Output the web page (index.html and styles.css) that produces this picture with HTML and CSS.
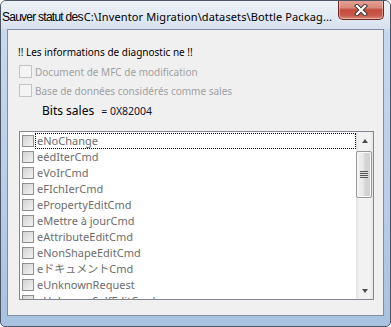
FILE: index.html
```html
<!DOCTYPE html>
<html lang="fr">

<head>
  <meta charset="UTF-8">
  <meta name="viewport" content="width=device-width, initial-scale=1.0">
  <title>Sauver statut des</title>
  <link rel="stylesheet" href="styles.css">
</head>

<body>
  <div class="window">
    <header class="titlebar">
      <span class="title"><span class="title-app">Sauver statut des</span>C:\Inventor Migration\datasets\Bottle Packag...</span>
      <button class="close" aria-label="Fermer">
        <svg width="14" height="12" viewBox="0 0 14 12">
          <path d="M3 2 L11 10 M11 2 L3 10" stroke="#3b3b3b" stroke-width="4.2" stroke-linecap="square" />
          <path d="M3 2 L11 10 M11 2 L3 10" stroke="#fff" stroke-width="2.2" stroke-linecap="square" />
        </svg>
      </button>
    </header>
    <section class="frame">
      <div class="client">
        <p class="note">!! Les informations de diagnostic ne !!</p>
        <label class="check disabled"><span class="box"></span>Document de MFC de modification</label>
        <label class="check disabled"><span class="box"></span>Base de données considérés comme sales</label>
        <div class="bits">
          <span class="bits-label">Bits sales</span>
          <span class="bits-value">= 0X82004</span>
        </div>
        <div class="list">
          <ul class="items">
            <li class="item"><span class="box"></span><span class="text focus">eNoChange</span></li>
            <li class="item"><span class="box"></span><span class="text">eédIterCmd</span></li>
            <li class="item"><span class="box"></span><span class="text">eVoIrCmd</span></li>
            <li class="item"><span class="box"></span><span class="text">eFIchIerCmd</span></li>
            <li class="item"><span class="box"></span><span class="text">ePropertyEditCmd</span></li>
            <li class="item"><span class="box"></span><span class="text">eMettre à jourCmd</span></li>
            <li class="item"><span class="box"></span><span class="text">eAttributeEditCmd</span></li>
            <li class="item"><span class="box"></span><span class="text">eNonShapeEditCmd</span></li>
            <li class="item"><span class="box"></span><span class="text">eドキュメントCmd</span></li>
            <li class="item"><span class="box"></span><span class="text">eUnknownRequest</span></li>
            <li class="item"><span class="box"></span><span class="text">eUnknownSelfEditCmd</span></li>
          </ul>
          <div class="scrollbar">
            <span class="arrow up"></span>
            <span class="thumb"><span class="grip"></span></span>
            <span class="track"></span>
            <span class="arrow down"></span>
          </div>
        </div>
      </div>
    </section>
  </div>
</body>

</html>
```

FILE: styles.css
```css
html {
  box-sizing: border-box;
  font-family: "Noto Sans", "Noto Sans CJK JP", sans-serif;
  font-size: 11px;
}

*,
*::before,
*::after {
  box-sizing: inherit;
}

body {
  margin: 0;
  width: 391px;
  height: 327px;
  overflow: hidden;
  background: #fff;
}

.window {
  width: 391px;
  height: 327px;
  border: 1px solid #4a5566;
  border-radius: 6px 6px 5px 5px;
  background: linear-gradient(to bottom, #c9dbef 0, #b8cee8 60%, #a9c2e0 100%);
  display: flex;
  flex-direction: column;
  overflow: hidden;
}

.titlebar {
  height: 28px;
  display: flex;
  align-items: flex-start;
  background: linear-gradient(to bottom, #eef2f7 0, #e3eaf3 50%, #d6e2ef 100%);
}

.title {
  margin-top: 8px;
  padding-left: 1px;
  color: #000;
  font-size: 11px;
  letter-spacing: 0.12px;
  white-space: nowrap;
  overflow: hidden;
}

.title-app {
  font-family: "Liberation Sans", sans-serif;
  font-size: 12px;
  letter-spacing: -0.75px;
  margin-right: 1px;
}

.close {
  margin-left: auto;
  margin-right: 6px;
  width: 46px;
  height: 20px;
  margin-top: -1px;
  padding: 0;
  border: 1px solid #6d2a22;
  border-top: 0;
  border-radius: 0 0 5px 5px;
  background: linear-gradient(to bottom, #e8a496 0, #d88a7c 40%, #c54b3b 52%, #c8584a 80%, #d98a78 100%);
  box-shadow: inset 0 0 0 1px rgba(255, 255, 255, .35);
  display: flex;
  align-items: center;
  justify-content: center;
}

.frame {
  flex: 1;
  padding: 0 6px 10px 6px;
}

.client {
  height: 100%;
  border: 1px solid #7f8da0;
  background: #f0f0f0;
  padding: 13px 9px 0 10px;
  color: #000;
}

.note {
  margin: 0;
  height: 19px;
  line-height: 19px;
  font-size: 10px;
}

.check {
  display: flex;
  align-items: center;
  height: 19px;
  margin-left: 1px;
  font-size: 10px;
}

.check .box {
  width: 13px;
  height: 13px;
  margin-right: 3px;
}

.disabled {
  color: #a0a0a0;
}

.disabled .box {
  border: 1px solid #c4c4c4;
  background: #f4f4f4;
}

.bits {
  display: flex;
  align-items: baseline;
  height: 20px;
  margin-top: 2px;
  padding-left: 24px;
}

.bits-label {
  font-size: 12px;
  margin-right: 7px;
}

.bits-value {
  font-size: 10.5px;
  color: #101030;
}

.list {
  margin-top: 9px;
  margin-left: 1px;
  width: 355px;
  height: 169px;
  border: 1px solid #828790;
  background: #fff;
  display: flex;
  overflow: hidden;
}

.items {
  flex: 1;
  margin: 0;
  padding: 1px 0 0 2px;
  list-style: none;
  overflow: hidden;
}

.item {
  display: flex;
  align-items: center;
  height: 16px;
  color: #6d6d6d;
}

.item .box {
  width: 12px;
  height: 12px;
  border: 1px solid #8e8f8f;
  background: linear-gradient(135deg, #d2d2d2 0, #e6e6e6 60%, #f4f4f4 100%);
  margin-right: 1px;
  flex-shrink: 0;
}

.text {
  flex: 1;
  height: 16px;
  line-height: 14px;
  padding-left: 1px;
  border: 1px solid transparent;
  white-space: nowrap;
}

.focus {
  border: 1px dotted #000;
}

.scrollbar {
  width: 17px;
  display: flex;
  flex-direction: column;
  background: linear-gradient(to right, #e3e3e3 0, #f2f2f2 20%, #f2f2f2 80%, #e6e6e6 100%);
}

.arrow {
  height: 17px;
  display: flex;
  align-items: center;
  justify-content: center;
}

.arrow::before {
  content: "";
  border-left: 3px solid transparent;
  border-right: 3px solid transparent;
}

.up::before {
  border-bottom: 4px solid #4d4d4d;
}

.down::before {
  border-top: 4px solid #4d4d4d;
}

.thumb {
  height: 47px;
  margin: 2px 1px 0 0;
  border: 1px solid #979797;
  border-radius: 2px;
  background: linear-gradient(to right, #f2f2f2 0, #e8e8e8 45%, #d6d6d6 55%, #cfcfcf 100%);
  box-shadow: inset 0 0 0 1px #f9f9f9;
  display: flex;
  align-items: center;
  justify-content: center;
}

.grip {
  width: 8px;
  height: 7px;
  background: repeating-linear-gradient(to bottom, #555 0, #555 1px, #e0e0e0 1px, #e0e0e0 2px);
}

.track {
  flex: 1;
}
```
